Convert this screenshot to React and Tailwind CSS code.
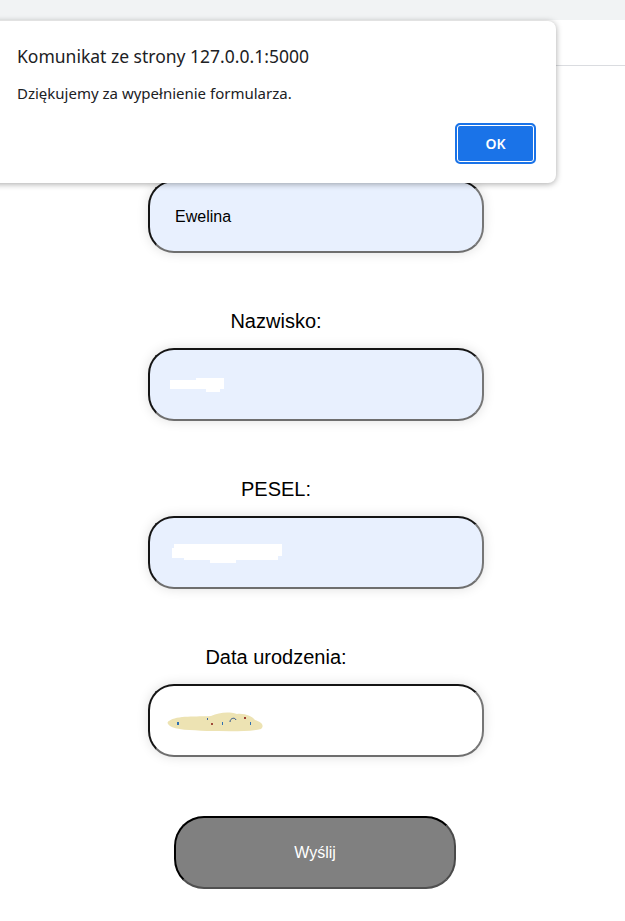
import React from "react";

const fields = [
  { label: "Imię:", filled: true, value: "Ewelina" },
  { label: "Nazwisko:", filled: true, blob: "white-short" },
  { label: "PESEL:", filled: true, blob: "white-long" },
  { label: "Data urodzenia:", filled: false, blob: "beige" },
];

// scribbles that hide the typed values
const Blob = ({ kind }) => {
  if (kind === "white-short") {
    return (
      <svg width="60" height="20" viewBox="0 0 60 20" className="-ml-[5px] mt-[3px]">
        <path d="M0 4 H26 V2 H54 V13 H50 V16 H36 V13 H0 Z" fill="#ffffff" />
      </svg>
    );
  }
  if (kind === "white-long") {
    return (
      <svg width="114" height="24" viewBox="0 0 114 24" className="-ml-[3px] mt-[2px]">
        <path d="M0 6 H2 V2 H110 V14 H106 V18 H64 V21 H38 V18 H12 V16 H0 Z" fill="#ffffff" />
      </svg>
    );
  }
  return (
    <svg width="100" height="26" viewBox="0 0 100 26" className="-ml-[8px] mt-[2px]">
      <path
        d="M2 12 C10 6 30 8 44 7 C52 4 60 2 70 5 C78 4 86 8 88 11 C94 13 98 16 94 20 C80 23 60 22 40 22 C24 21 8 21 3 17 C0 15 0 13 2 12 Z"
        fill="#ede3b3"
      />
      <rect x="10" y="13" width="2" height="3" fill="#2f6fb0" />
      <rect x="40" y="9" width="1" height="2" fill="#3a66a8" />
      <rect x="44" y="14" width="2" height="2" fill="#a04b3a" />
      <rect x="55" y="13" width="1" height="3" fill="#2f6fb0" />
      <path d="M63 13 C63 9 68 8 69 11" stroke="#2a4f86" strokeWidth="1" fill="none" />
      <rect x="77" y="8" width="2" height="2" fill="#9a3b2f" />
      <rect x="83" y="13" width="1" height="3" fill="#2f6fb0" />
    </svg>
  );
};

const Field = ({ label, filled, value, blob, first }) => (
  <div className={first ? "mt-[76px]" : "mt-[57px]"}>
    <div className="w-[256px] text-center text-[20px] leading-[23px] text-black">{label}</div>
    <div
      className={`mt-[15px] flex h-[73px] w-[336px] items-center rounded-[26px] border-2 border-t-[#141414] border-l-[#141414] border-r-[#767676] border-b-[#6e6e6e] pl-[25px] text-[16px] text-black shadow-[0_0_12px_rgba(0,0,0,0.13)] ${
        filled ? "bg-[#e8f0fe]" : "bg-white"
      }`}
    >
      {value ? <span>{value}</span> : <Blob kind={blob} />}
    </div>
  </div>
);

export default function App() {
  return (
    <div className="relative min-h-[921px] overflow-hidden bg-white font-['Liberation_Sans',Arial,sans-serif]">
      <div className="h-[20px] bg-[#f1f3f4]" />
      <div className="h-[46px] border-b border-[#dadce0]" />

      <div className="pl-[148px]">
        {fields.map((f, i) => (
          <Field key={f.label} {...f} first={i === 0} />
        ))}

        <div className="mt-[59px] pl-[26px]">
          <button className="flex h-[73px] w-[282px] items-center justify-center rounded-[30px] border-2 border-t-black border-l-black border-r-[#4a4a4a] border-b-[#505050] bg-[#808080] text-[16px] text-white">
            Wyślij
          </button>
        </div>
      </div>

      {/* browser alert */}
      <div className="absolute left-[-16px] top-[21px] h-[162px] w-[572px] rounded-[8px] bg-white pl-[33px] pr-[20px] font-['Noto_Sans','Open_Sans',sans-serif] shadow-[0_1px_6px_rgba(0,0,0,0.35)]">
        <div className="pt-[24px] text-[17.5px] leading-[22px] text-[#202124]">Komunikat ze strony 127.0.0.1:5000</div>
        <div className="mt-[16px] text-[15px] leading-[20px] text-[#202124]">Dziękujemy za wypełnienie formularza.</div>
        <div className="mt-[20px] flex justify-end">
          <button className="flex h-[41px] w-[81px] items-center justify-center rounded-[5px] border-2 border-[#1a73e8] bg-[#1a73e8] text-[14px] font-semibold text-white shadow-[inset_0_0_0_1px_#ffffff]">
            OK
          </button>
        </div>
      </div>
    </div>
  );
}
